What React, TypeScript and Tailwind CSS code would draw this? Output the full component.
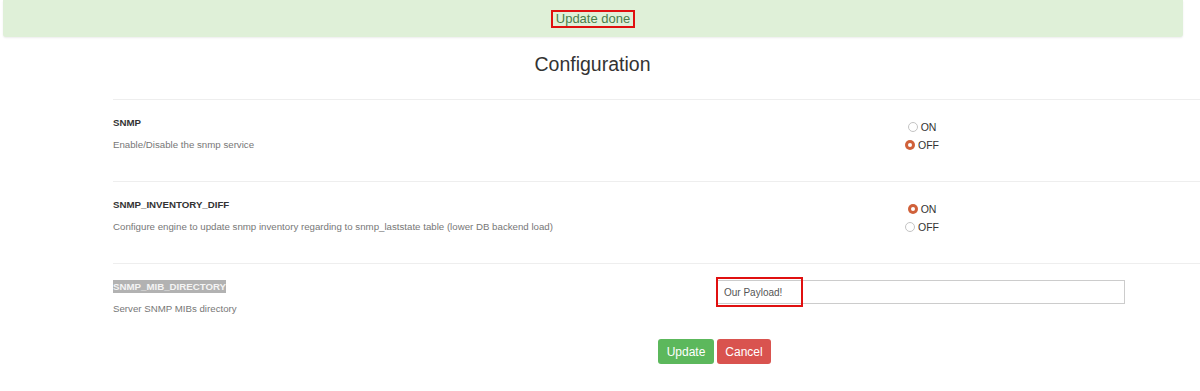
import React from 'react';

function Radio({ checked, label }: { checked: boolean; label: string }) {
  return (
    <div className="flex items-center justify-center h-[18px] leading-[18px]">
      {checked ? (
        <span className="w-[10px] h-[10px] rounded-full bg-[#d0613a] flex items-center justify-center">
          <span className="w-[4px] h-[4px] rounded-full bg-white" />
        </span>
      ) : (
        <span className="w-[10px] h-[10px] rounded-full border border-[#c4c4c4] bg-white" />
      )}
      <span className="ml-[3px] text-[10.5px] text-[#333]">{label}</span>
    </div>
  );
}

function Row({
  title,
  desc,
  children,
  highlight,
  last,
}: {
  title: string;
  desc: string;
  children: React.ReactNode;
  highlight?: boolean;
  last?: boolean;
}) {
  return (
    <div className={`flex border-t border-[#eee] ${last ? 'h-[76px]' : 'h-[82px]'}`}>
      <div className="w-[603px] pt-[14px]">
        <div className="h-[18px] leading-[18px] text-[9.7px] font-bold text-[#333]">
          {highlight ? <span className="bg-[#b2b2b2] text-[#f4f4f4] py-[1px]">{title}</span> : title}
        </div>
        <div className="mt-[4px] h-[18px] leading-[18px] text-[9.7px] text-[#777]">{desc}</div>
      </div>
      <div className="w-[412px]">{children}</div>
    </div>
  );
}

export default function App() {
  return (
    <div className="w-[1200px] h-[391px] bg-white overflow-hidden font-['Liberation_Sans',Arial,sans-serif]">
      <div className="ml-[3px] w-[1180px] h-[37px] bg-[#dff0d8] rounded-b-[3px] shadow-[0_1px_2px_rgba(0,0,0,0.08)] flex items-center justify-center">
        <span className="border-2 border-[#e01010] px-[3px] h-[18px] leading-[14px] text-[13px] text-[#4a7d4a]">
          Update done
        </span>
      </div>

      <h1 className="w-[1185px] mt-[15px] mb-[23px] h-[24px] leading-[24px] text-center text-[19.5px] text-[#333]">
        Configuration
      </h1>

      <div className="ml-[113px] w-[1087px]">
        <Row title="SNMP" desc="Enable/Disable the snmp service">
          <div className="pt-[18px] w-[412px]">
            <Radio checked={false} label="ON" />
            <Radio checked label="OFF" />
          </div>
        </Row>
        <Row
          title="SNMP_INVENTORY_DIFF"
          desc="Configure engine to update snmp inventory regarding to snmp_laststate table (lower DB backend load)"
        >
          <div className="pt-[18px] w-[412px]">
            <Radio checked label="ON" />
            <Radio checked={false} label="OFF" />
          </div>
        </Row>
        <Row title="SNMP_MIB_DIRECTORY" desc="Server SNMP MIBs directory" highlight last>
          <div className="pt-[16px]">
            <div className="relative w-[409px] h-[24px] border border-[#ccc] bg-white flex items-center pl-[7px] text-[10px] text-[#555]">
              Our Payload!
              <div className="absolute left-[-1px] top-[-4px] w-[87px] h-[30px] border-2 border-[#e01010]" />
            </div>
          </div>
        </Row>
      </div>

      <div className="ml-[658px] flex gap-[3px]">
        <button className="w-[56px] h-[25px] rounded-[3px] bg-[#5cb85c] text-white text-[12px]">Update</button>
        <button className="w-[54px] h-[25px] rounded-[3px] bg-[#d9534f] text-white text-[12px]">Cancel</button>
      </div>
    </div>
  );
}
